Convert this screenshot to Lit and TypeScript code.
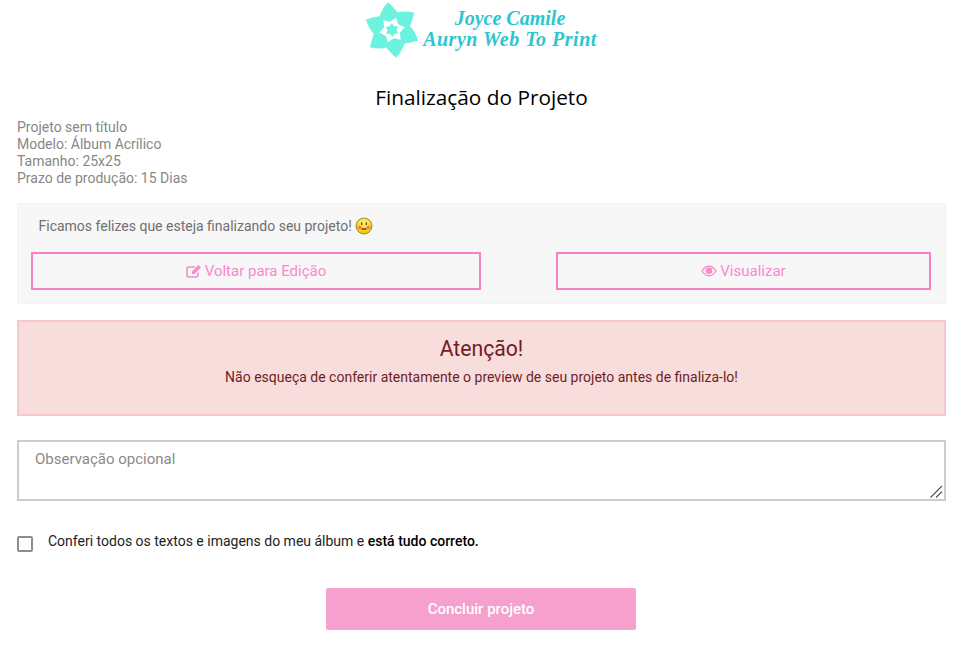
import { html, svg, css, LitElement } from 'lit'
import { customElement } from 'lit/decorators.js'

const petals = [0, 60, 120, 180, 240, 300]

@customElement('app-root')
export class AppRoot extends LitElement {
  static styles = css`
    :host {
      display: block;
      font-family: Roboto, sans-serif;
      font-size: 14px;
      color: #777;
      background: #fff;
      padding: 0 15px 22px 17px;
    }
    .logo {
      display: flex;
      justify-content: center;
      align-items: center;
      height: 60px;
      gap: 3px;
      padding-right: 2px;
    }
    .logo svg {
      display: block;
      flex: none;
    }
    .brand {
      margin-top: -2px;
      font-family: 'Liberation Serif', serif;
      font-style: italic;
      font-weight: 700;
      font-size: 20px;
      line-height: 21px;
      color: #2cc6cf;
      text-align: center;
      letter-spacing: 0.5px;
    }
    .brand span {
      letter-spacing: 0;
    }
    h1 {
      margin: 22px 0 0;
      font-family: 'Open Sans', sans-serif;
      font-size: 20.8px;
      font-weight: 400;
      line-height: 30px;
      color: #000;
      text-align: center;
    }
    .info {
      margin-top: 7px;
      line-height: 17px;
      color: #878787;
    }
    .panel {
      margin-top: 16px;
      height: 101px;
      box-sizing: border-box;
      background: #f7f7f7;
      border: 1px solid #f3f3f3;
      padding: 12px 14px 0 13px;
    }
    .happy {
      display: flex;
      align-items: center;
      gap: 3px;
      height: 20px;
      padding-left: 7.500px;
      color: #6f6f6f;
    }
    .actions {
      display: flex;
      justify-content: space-between;
      margin-top: 16px;
    }
    .btn {
      box-sizing: border-box;
      height: 38px;
      border: 2px solid #f77fcb;
      display: flex;
      align-items: center;
      justify-content: center;
      gap: 3px;
      color: #f98acb;
      font-size: 15px;
    }
    .btn.edit { width: 450px; }
    .btn.view { width: 375px; }
    .alert {
      margin-top: 16px;
      height: 96px;
      box-sizing: border-box;
      background: #f7dddc;
      border: 2px solid #f5c9cc;
      color: #721c24;
      text-align: center;
      padding-top: 13px;
    }
    .alert h2 {
      margin: 0;
      font-size: 21.200px;
      font-weight: 400;
      line-height: 28px;
    }
    .alert p {
      margin: 4px 0 0;
      font-size: 14px;
      line-height: 20px;
    }
    .note {
      position: relative;
      margin-top: 24px;
    }
    textarea {
      display: block;
      box-sizing: border-box;
      width: 100%;
      height: 61px;
      border: 2px solid #ccc;
      padding: 7px 16px;
      font-family: Roboto, sans-serif;
      font-size: 15px;
      line-height: 20px;
      outline: none;
      resize: none;
    }
    textarea::placeholder {
      color: #8a8a8a;
      opacity: 1;
    }
    .grip {
      position: absolute;
      right: 3px;
      bottom: 3px;
      display: block;
    }
    .confirm {
      display: flex;
      align-items: flex-start;
      gap: 15px;
      margin-top: 31px;
      color: #222;
      line-height: 18px;
    }
    .box {
      box-sizing: border-box;
      flex: none;
      width: 16px;
      height: 16px;
      margin-top: 4px;
      border: 2px solid #8f8f8f;
      border-radius: 2px;
      background: #fff;
    }
    .confirm b {
      font-weight: 500;
      color: #000;
    }
    .finish {
      display: flex;
      justify-content: center;
      margin-top: 36px;
    }
    .finish button {
      width: 310px;
      height: 42px;
      margin-right: 1px;
      border: 0;
      border-radius: 2px;
      background: #f6a0ce;
      color: #fff;
      font-family: Roboto, sans-serif;
      font-size: 15px;
      font-weight: 500;
    }
  `

  private flower() {
    return html`<svg width="56" height="56" viewBox="-28 -28 56 56">
      <g transform="rotate(-12)">
        ${petals.map(
          (a) => svg`<path transform="rotate(${a})" fill="#6cf3df"
            d="M2 -28 Q7 -21 10 -14.500 L0 0 L-10 -14.500 Q-6 -23 2 -28Z" />`,
        )}
        ${petals.map(
          (a) => svg`<path transform="rotate(${a + 30})" fill="#fff" d="M0 -13 L5 -6 L-5 -6Z" />`,
        )}
        <circle r="8.500" fill="#fff" />
        ${petals.map(
          (a) => svg`<path transform="rotate(${a + 10})" fill="#6cf3df" d="M0 -7 L3.500 -2 L-3.500 -2Z" />`,
        )}
        <circle r="4" fill="#6cf3df" />
      </g>
    </svg>`
  }

  private emoji() {
    return html`<svg width="18" height="18" viewBox="0 0 18 18">
      <defs>
        <radialGradient id="face" cx="50%" cy="30%" r="70%">
          <stop offset="0" stop-color="#fff07a" />
          <stop offset="1" stop-color="#eec400" />
        </radialGradient>
      </defs>
      <circle cx="9" cy="9" r="8" fill="url(#face)" stroke="#8a7a30" stroke-width="0.800" />
      <ellipse cx="4.600" cy="10.300" rx="2" ry="1.600" fill="#f0703a" opacity="0.800" />
      <ellipse cx="13.400" cy="10.300" rx="2" ry="1.600" fill="#f0703a" opacity="0.800" />
      <rect x="6" y="5.500" width="1.400" height="2.400" fill="#5a4210" />
      <rect x="10.600" y="5.500" width="1.400" height="2.400" fill="#5a4210" />
      <path d="M6.500 12 H11.500" stroke="#8f2c10" stroke-width="1.500" />
    </svg>`
  }

  render() {
    return html`
      <div class="logo">
        ${this.flower()}
        <div class="brand"><span>Joyce Camile</span><br />Auryn Web To Print</div>
      </div>
      <h1>Finalização do Projeto</h1>
      <div class="info">
        Projeto sem título<br />
        Modelo: Álbum Acrílico<br />
        Tamanho: 25x25<br />
        Prazo de produção: 15 Dias
      </div>
      <div class="panel">
        <div class="happy">Ficamos felizes que esteja finalizando seu projeto! ${this.emoji()}</div>
        <div class="actions">
          <div class="btn edit">
            <svg width="16" height="14" viewBox="0 0 16 14">
              <path fill="none" stroke="currentColor" stroke-width="1.600"
                d="M12 8.500V11a2 2 0 0 1-2 2H3a2 2 0 0 1-2-2V5a2 2 0 0 1 2-2h6" />
              <path fill="currentColor" d="M6 7.500 12.600 1 15 3.400 8.400 10H6Z" />
            </svg>
            Voltar para Edição
          </div>
          <div class="btn view">
            <svg width="16" height="12" viewBox="0 0 16 12">
              <path fill="none" stroke="currentColor" stroke-width="1.400"
                d="M1 6C3 2.800 5.300 1.200 8 1.200S13 2.800 15 6c-2 3.200-4.300 4.800-7 4.800S3 9.200 1 6Z" />
              <circle cx="8" cy="5.800" r="3.300" fill="currentColor" />
            </svg>
            Visualizar
          </div>
        </div>
      </div>
      <div class="alert">
        <h2>Atenção!</h2>
        <p>Não esqueça de conferir atentamente o preview de seu projeto antes de finaliza-lo!</p>
      </div>
      <div class="note">
        <textarea placeholder="Observação opcional"></textarea>
        <svg class="grip" width="14" height="14" viewBox="0 0 14 14">
          <path d="M1.500 13.500 13 2M7 13.500 13 7.500" stroke="#555" stroke-width="1.200" fill="none" />
        </svg>
      </div>
      <div class="confirm">
        <span class="box"></span>
        <span>Conferi todos os textos e imagens do meu álbum e <b>está tudo correto.</b></span>
      </div>
      <div class="finish"><button>Concluir projeto</button></div>
    `
  }
}
